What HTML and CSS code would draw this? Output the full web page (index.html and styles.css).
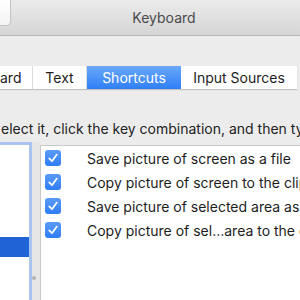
FILE: index.html
```html
<!DOCTYPE html>
<html lang="en">
<head>
    <meta charset="UTF-8">
    <meta name="viewport" content="width=device-width, initial-scale=1.0">
    <title>Keyboard</title>
    <link rel="stylesheet" href="styles.css">
</head>
<body>
    <div class="window">
        <div class="titlebar">
            <div class="nav-btn"></div>
            <div class="title">Keyboard</div>
        </div>
        <div class="toolbar"></div>
        <div class="tabs">
            <div class="tab tab-cut">ard</div>
            <div class="tab tab-text">Text</div>
            <div class="tab tab-shortcuts active">Shortcuts</div>
            <div class="tab tab-input">Input Sources</div>
        </div>
        <p class="hint">elect it, click the key combination, and then type the new keys.</p>
        <div class="panes">
            <div class="categories">
                <div class="cat-row selected"></div>
            </div>
            <div class="splitter"><span class="grip"></span></div>
            <div class="shortcuts">
                <div class="row">
                    <span class="check"><svg width="16" height="16" viewBox="0 0 16 16"><path d="M4.2 8.4 L7 11.2 L11.8 4.6" fill="none" stroke="#fff" stroke-width="1.7" stroke-linecap="round" stroke-linejoin="round"/></svg></span>
                    <span class="label">Save picture of screen as a file</span>
                </div>
                <div class="row">
                    <span class="check"><svg width="16" height="16" viewBox="0 0 16 16"><path d="M4.2 8.4 L7 11.2 L11.8 4.6" fill="none" stroke="#fff" stroke-width="1.7" stroke-linecap="round" stroke-linejoin="round"/></svg></span>
                    <span class="label">Copy picture of screen to the clipboard</span>
                </div>
                <div class="row">
                    <span class="check"><svg width="16" height="16" viewBox="0 0 16 16"><path d="M4.2 8.4 L7 11.2 L11.8 4.6" fill="none" stroke="#fff" stroke-width="1.7" stroke-linecap="round" stroke-linejoin="round"/></svg></span>
                    <span class="label">Save picture of selected area as a file</span>
                </div>
                <div class="row">
                    <span class="check"><svg width="16" height="16" viewBox="0 0 16 16"><path d="M4.2 8.4 L7 11.2 L11.8 4.6" fill="none" stroke="#fff" stroke-width="1.7" stroke-linecap="round" stroke-linejoin="round"/></svg></span>
                    <span class="label">Copy picture of sel…area to the clipboard</span>
                </div>
            </div>
        </div>
    </div>
</body>
</html>
```

FILE: styles.css
```css
html, body {
    margin: 0;
    padding: 0;
    width: 300px;
    height: 300px;
    overflow: hidden;
    background-color: #ececec;
}
.window {
    font-family: Inter, 'Liberation Sans', Arial, sans-serif;
    font-size: 14px;
    color: #222;
    width: 300px;
    height: 300px;
    display: flex;
    flex-direction: column;
    overflow: hidden;
}
.titlebar {
    height: 35px;
    flex: none;
    display: flex;
    align-items: flex-start;
    background: linear-gradient(#ebebeb, #d5d5d5);
    border-bottom: 1px solid #b9b9b9;
}
.nav-btn {
    width: 18px;
    height: 25px;
    margin-left: -9px;
    background: linear-gradient(#ffffff, #f4f4f4);
    border: 1px solid #c4c4c4;
    border-top: none;
    border-radius: 0 0 5px 0;
    flex: none;
}
.title {
    flex: none;
    width: 306px;
    text-align: center;
    line-height: 35px;
    color: #4a4a4a;
    font-size: 14px;
}
.toolbar {
    height: 30px;
    flex: none;
}
.tabs {
    height: 23px;
    flex: none;
    display: flex;
    background: #fff;
    box-shadow: 0 1px 1px rgba(0, 0, 0, 0.18);
    width: 297px;
}
.tab {
    flex: none;
    line-height: 23px;
    text-align: center;
    color: #1d1d1d;
    border-right: 1px solid #dcdcdc;
    white-space: nowrap;
}
.tab-cut {
    width: 19px;
    padding-right: 13px;
    text-align: right;
}
.tab-text {
    width: 53px;
}
.tab-shortcuts {
    width: 94px;
}
.tab-input {
    width: 116px;
    border-right: none;
}
.tab.active {
    background: linear-gradient(#6aa9fb, #2f7ff6);
    color: #fff;
    border-right: none;
}
.hint {
    margin: 31px 0 0 0;
    padding-left: 1px;
    line-height: 18px;
    white-space: nowrap;
    color: #222;
}
.panes {
    flex: 1;
    display: flex;
    margin-top: 4px;
    min-height: 0;
}
.categories {
    width: 29px;
    flex: none;
    background: #fff;
    border: 3px solid #a9c5ef;
    border-left: none;
    border-bottom: none;
}
.cat-row.selected {
    margin-top: 92px;
    height: 20px;
    background: #1f63d6;
}
.splitter {
    width: 8px;
    flex: none;
    position: relative;
    background: #e6e6e6;
}
.grip {
    position: absolute;
    left: 0;
    top: 134px;
    width: 4px;
    height: 4px;
    border-radius: 50%;
    background: #b3b3b3;
}
.shortcuts {
    flex: 1;
    background: #fff;
    border-top: 1px solid #c9c9c9;
    border-left: 1px solid #c9c9c9;
    margin-top: 3px;
}
.row {
    height: 24px;
    display: flex;
    align-items: center;
    white-space: nowrap;
}
.check {
    width: 16px;
    height: 16px;
    margin-left: 4px;
    border-radius: 3px;
    background: linear-gradient(#5b9cf8, #2f7cf4);
    display: flex;
    flex: none;
}
.label {
    margin-left: 26px;
    color: #1d1d1d;
}
```
